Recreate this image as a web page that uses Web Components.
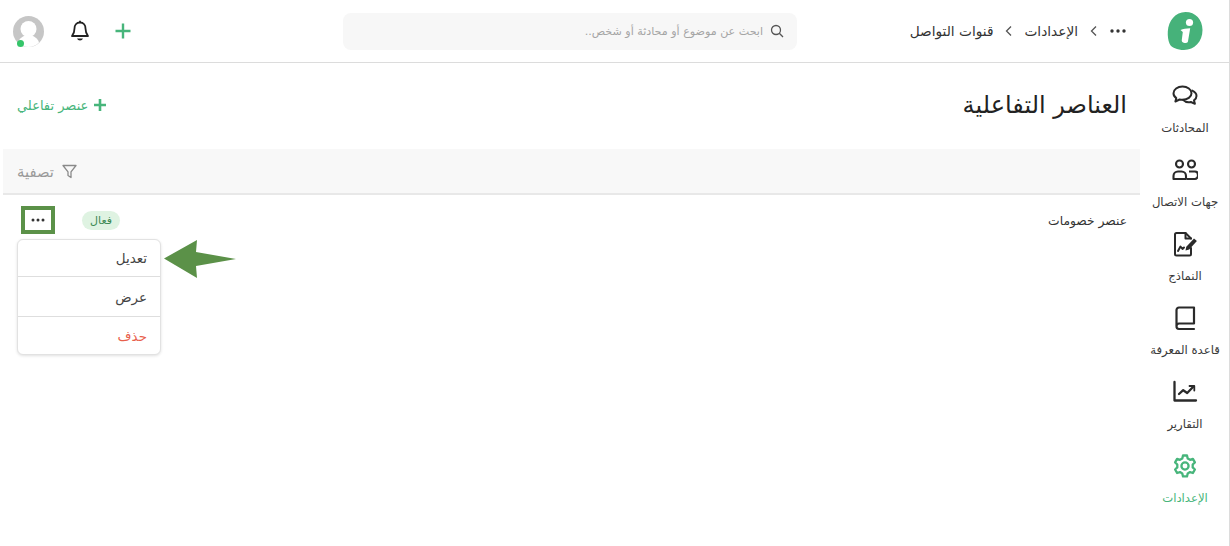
<!DOCTYPE html>
<html lang="ar" dir="rtl">
<head>
<meta charset="utf-8">
<style>
html,body{margin:0;padding:0;background:#fff;height:100%;overflow:hidden}
body{font-family:"DejaVu Sans",sans-serif;color:#2b2b2b}
</style>
</head>
<body>
<app-shell>
  <side-nav slot="nav">
    <nav-item label="المحادثات" icon="chat"></nav-item>
    <nav-item label="جهات الاتصال" icon="people"></nav-item>
    <nav-item label="النماذج" icon="form"></nav-item>
    <nav-item label="قاعدة المعرفة" icon="book"></nav-item>
    <nav-item label="التقارير" icon="chart"></nav-item>
    <nav-item label="الإعدادات" icon="gear" active></nav-item>
  </side-nav>
  <top-bar slot="top"></top-bar>
  <page-header title-text="العناصر التفاعلية" action="عنصر تفاعلي"></page-header>
  <filter-bar label="تصفية"></filter-bar>
  <item-row name="عنصر خصومات" status="فعال"></item-row>
</app-shell>
<script>
const FONT='"DejaVu Sans",sans-serif';
const ICONS={
chat:'<g fill="none" stroke="#2a2a2a" stroke-width="2" stroke-linejoin="round" stroke-linecap="round"><path d="M10.500 3.500c-5 0-9 3-9 6.700 0 2 1.100 3.700 2.800 4.900l-.9 3.400 4.200-2c.9.200 1.900.3 2.900.3 5 0 9-3 9-6.600s-4-6.700-9-6.700z"/><path d="M20.300 7.600c2.500 1.100 4.200 3.100 4.200 5.400 0 1.800-1 3.300-2.500 4.400l.9 3.400-4-1.800c-3.100.7-6.100-.2-7.900-2.100"/></g>',
people:'<g fill="none" stroke="#2a2a2a" stroke-width="2.100" stroke-linejoin="round"><circle cx="7.500" cy="7" r="3.500"/><circle cx="19.500" cy="7" r="3.500"/><path d="M1.500 22v-3c0-2.500 2-4.500 4.500-4.500h3.500c2.500 0 4.500 2 4.500 4.500v3z"/><path d="M17 14.500h6c1.700 0 3 1.600 3 3.700s-1.300 3.800-3 3.800h-8"/></g>',
form:'<g fill="none" stroke="#2a2a2a" stroke-width="2" stroke-linejoin="round" stroke-linecap="round"><path d="M19 17v6a1.500 1.500 0 0 1-1.500 1.500H4.500A1.500 1.500 0 0 1 3 23V3.500A1.500 1.500 0 0 1 4.500 2H13.500L19 7.500"/><path d="M13.500 2v5.500H19"/><path d="M6 20l2.500-4.500 2 2.500 1.500-1.500"/></g><path d="M13.500 19.500l.8-3.700 7.700-8.300 2.900 2.600-7.700 8.300z" fill="#2a2a2a"/>',
book:'<g fill="none" stroke="#2a2a2a" stroke-width="2.200" stroke-linejoin="round" stroke-linecap="round"><path d="M4.500 21V5A2.500 2.500 0 0 1 7 2.500H22V18.500H7A2.750 2.750 0 0 0 4.500 21.200 2.700 2.700 0 0 0 7 24H22"/></g>',
chart:'<g fill="none" stroke="#2a2a2a" stroke-width="2.300" stroke-linejoin="round" stroke-linecap="round"><path d="M2.500 3V21.500H24"/><path d="M7 15l4.200-3.800 4 2.800 6.300-6.500"/><path d="M17.500 7h4.800v4.500" stroke-width="1.800"/></g>',
gear:'<g fill="none" stroke="#47b57b" stroke-width="2.300" stroke-linejoin="round"><circle cx="13" cy="13" r="3.600"/><path d="M11 2.500h4l.7 3 2.300 1.300 2.900-.9 2 3.500-2.200 2.100v2.900l2.200 2.100-2 3.500-2.900-.9-2.300 1.300-.7 3h-4l-.7-3-2.300-1.300-2.900.9-2-3.500 2.200-2.100v-2.900L3.100 9.400l2-3.500 2.900.9 2.300-1.300z"/></g>'
};
function def(name,html){
  customElements.define(name,class extends HTMLElement{
    connectedCallback(){
      if(this.shadowRoot)return;
      const a=n=>this.getAttribute(n)||'';
      this.attachShadow({mode:'open'}).innerHTML=typeof html==='function'?html(a,this):html;
    }
  });
}
def('app-shell',`<style>
:host{display:flex;flex-direction:row;width:1230px;height:546px;overflow:hidden;background:#fff}
.side{flex:0 0 89px;border-inline-start:1px solid #dcdcdc}
.main{flex:1;min-width:0;display:flex;flex-direction:column}
</style><div class="side"><slot name="nav"></slot></div><div class="main"><slot name="top"></slot><slot></slot></div>`);

def('side-nav',`<style>
:host{display:flex;flex-direction:column}
.logo{height:62px;border-bottom:1px solid #dcdcdc;display:flex;align-items:center;justify-content:center;padding-left:1px}
.logo svg{display:block}
.list{display:flex;flex-direction:column;padding:20px 0 0 1px}
</style><div class="logo"><svg width="36" height="40" viewBox="0 0 36 40"><path d="M18.500 1C28.500 1 35.500 8.500 35.500 19c0 11.500-8 20-18.500 20-3.500 0-6.500-.6-9-1.800-2.500-.8-4.500-2.200-5.500-4.700C1.200 29.500.5 25 .8 20.500 1.500 9.500 8.500 1 18.500 1z" fill="#46b27a"/><circle cx="22.500" cy="11.500" r="3.600" fill="#fff"/><path d="M13.500 19c2.500-1 6-1.700 9.700-1.700l-2.200 13c-.2 1.200-.9 1.700-2.100 1.700-1.700 0-3.200-.4-3.800-1.200-.4-.5-.4-1.200-.3-2l1-7.800z" fill="#fff"/></svg></div><div class="list"><slot></slot></div>`);

def('nav-item',(a,el)=>{const act=el.hasAttribute('active');return `<style>
:host{display:flex;flex-direction:column;align-items:center;height:74px;box-sizing:border-box}
svg{display:block;width:26px;height:26px}
span{font:11.700px/16px ${FONT};color:${act?'#47b57b':'#3a3a3a'};margin-top:11px;white-space:nowrap}
</style><svg viewBox="0 0 26 26">${ICONS[a('icon')]}</svg><span>${a('label')}</span>`});

def('top-bar',`<style>
:host{display:flex;flex:0 0 auto;height:62px;border-bottom:1px solid #dcdcdc;align-items:center;padding:0 13px;font-family:${FONT}}
.crumbs{display:flex;align-items:center;gap:11.500px;font-size:13.700px;color:#333;flex:0 0 330px;box-sizing:border-box}
.search{flex:0 0 454px;height:37px;background:#f7f7f7;border-radius:8px;display:flex;align-items:center;padding:0 13px;box-sizing:border-box;gap:7px;font-size:11.100px;color:#a5a5a5}
.tools{display:flex;align-items:center;margin-inline-start:auto;flex:none}
.tools svg+svg{margin-inline-start:24px}
.avatar{position:relative;width:31px;height:31px;flex:none;margin-inline-start:26px}
.dot{position:absolute;left:4px;bottom:0;width:7px;height:7px;border-radius:50%;background:#35c56a}
svg{display:block;flex:none}
</style>
<div class="crumbs">
<svg width="18" height="6" viewBox="0 0 18 6"><circle cx="3" cy="3" r="1.700" fill="#333"/><circle cx="9" cy="3" r="1.700" fill="#333"/><circle cx="15" cy="3" r="1.700" fill="#333"/></svg>
<svg width="8" height="12" viewBox="0 0 8 12"><path d="M6 1.500L1.500 6 6 10.500" fill="none" stroke="#555" stroke-width="1.300"/></svg>
<span>الإعدادات</span>
<svg width="8" height="12" viewBox="0 0 8 12"><path d="M6 1.500L1.500 6 6 10.500" fill="none" stroke="#555" stroke-width="1.300"/></svg>
<span>قنوات التواصل</span>
</div>
<div class="search"><svg width="14" height="14" viewBox="0 0 14 14"><circle cx="6" cy="6" r="4.500" fill="none" stroke="#555" stroke-width="1.300"/><path d="M9.300 9.300L13 13" stroke="#555" stroke-width="1.300"/></svg><span>ابحث عن موضوع أو محادثة أو شخص..</span></div>
<div class="tools">
<svg width="18" height="18" viewBox="0 0 18 18"><path d="M9 1.500v15M1.500 9h15" stroke="#47b57b" stroke-width="2.400"/></svg>
<svg width="20" height="22" viewBox="0 0 20 22"><path d="M10 2.500c-3.700 0-5.500 2.800-5.500 6 0 3.500-.8 5.300-2.500 7.500h16c-1.700-2.200-2.500-4-2.500-7.500 0-3.200-1.800-6-5.500-6z" fill="none" stroke="#222" stroke-width="1.800" stroke-linejoin="round"/><path d="M10 .8v1.700" stroke="#222" stroke-width="1.800"/><path d="M7 18.500c.6 1.300 1.600 2 3 2s2.400-.7 3-2z" fill="#222"/></svg>
<div class="avatar"><svg width="31" height="31" viewBox="0 0 31 31"><circle cx="15.500" cy="15.500" r="15.500" fill="#c6c6c6"/><circle cx="15.500" cy="13" r="8" fill="#fff"/><path d="M5 26.500c1.500-4.600 5.500-7.200 10.500-7.200s9 2.600 10.500 7.200c-2.700 2.800-6.400 4.500-10.500 4.500S7.700 29.300 5 26.500z" fill="#fff"/></svg><span class="dot"></span></div>
</div>`);

def('page-header',a=>`<style>
:host{display:flex;flex:0 0 auto;height:86px;align-items:center;justify-content:space-between;padding:0 13px 2px 17px;box-sizing:border-box;font-family:${FONT}}
h1{margin:0;font:400 24px/32px ${FONT};color:#222}
.add{display:flex;align-items:center;gap:6px;font-size:13px;color:#47b57b}
svg{display:block}
</style><h1>${a('title-text')}</h1><div class="add"><svg width="12" height="12" viewBox="0 0 12 12"><path d="M6 0v12M0 6h12" stroke="#47b57b" stroke-width="2.600"/></svg><span>${a('action')}</span></div>`);

def('filter-bar',a=>`<style>
:host{display:flex;flex:0 0 auto;height:46px;margin-left:3px;background:#f8f8f8;border-bottom:2px solid #e8e8e8;box-sizing:border-box;align-items:center;justify-content:flex-end;padding-left:14px;gap:8px;font-size:14.800px;color:#9a9a9a}
svg{display:block}
</style><svg width="15" height="15" viewBox="0 0 15 15"><path d="M1 1.500h13L9 7.800V13.500L6 11.500V7.800z" fill="none" stroke="#8a8a8a" stroke-width="1.300" stroke-linejoin="round"/></svg><span>${a('label')}</span>`);

def('item-row',a=>`<style>
:host{display:flex;flex:0 0 auto;height:49px;position:relative;align-items:center;justify-content:space-between;padding:0 13px 0 21px;box-sizing:border-box;font-size:12.300px;color:#333}
.name{margin-top:2px}
.left{display:flex;align-items:center;gap:27px}
status-badge{margin-top:2px}
</style><span class="name">${a('name')}</span>
<div class="left"><status-badge>${a('status')}</status-badge><more-button></more-button></div>
<row-menu></row-menu><pointer-arrow></pointer-arrow>`);

def('status-badge',`<style>
:host{display:inline-flex;align-items:center;justify-content:center;width:38px;height:19px;border-radius:10px;background:#dff3e2;color:#3d8a55;font-size:11px;line-height:19px}
</style><slot></slot>`);

def('more-button',`<style>
:host{display:flex;align-items:center;justify-content:center;width:34px;height:28px;box-sizing:border-box;border:4px solid #5b9148;background:#fff}
svg{display:block}
</style><svg width="14" height="4" viewBox="0 0 14 4"><circle cx="2" cy="2" r="1.500" fill="#333"/><circle cx="7" cy="2" r="1.500" fill="#333"/><circle cx="12" cy="2" r="1.500" fill="#333"/></svg>`);

def('row-menu',`<style>
:host{position:absolute;left:17px;top:44px;width:144px;box-sizing:border-box;background:#fff;border:1px solid #e2e2e2;border-radius:6px;box-shadow:0 1px 3px rgba(0,0,0,.12);display:flex;flex-direction:column;font-size:13.500px;color:#444}
div{display:flex;align-items:center;padding:0 13px;border-bottom:1px solid #dedede;height:39px}
div:first-of-type{height:36px}
div:last-of-type{border:none;height:37px;color:#e8604c}
</style><div>تعديل</div><div>عرض</div><div>حذف</div>`);

def('pointer-arrow',`<style>
:host{position:absolute;left:164px;top:45px;width:72px;height:38px;display:block}
svg{display:block}
</style><svg width="72" height="38" viewBox="0 0 72 38"><path d="M0 18.500L33 0l-1 12 40 7-40 7 1 12z" fill="#5b9148"/></svg>`);
</script>
</body>
</html>
